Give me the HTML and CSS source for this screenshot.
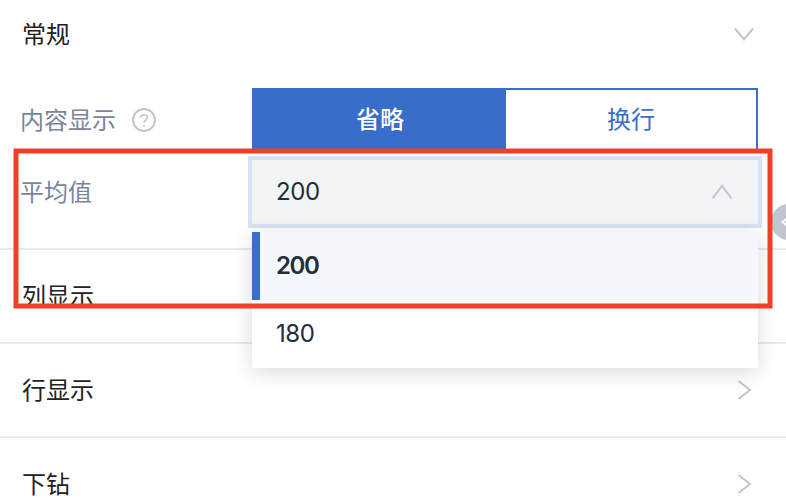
FILE: index.html
```
<!DOCTYPE html>
<html lang="zh-CN">
<head>
    <meta charset="UTF-8">
    <meta name="viewport" content="width=device-width, initial-scale=1.0">
    <title>常规</title>
    <link rel="stylesheet" href="styles.css">
</head>
<body>
    <div class="panel">

        <!-- Expanded section -->
        <div class="section section-open">
            <div class="section-head">
                <span class="section-title">常规</span>
                <svg class="arrow" width="20" height="20" viewBox="0 0 20 20"><path d="M1 4.5L10 15.5L19 4.5"/></svg>
            </div>
            <div class="form">
                <div class="form-row">
                    <div class="label">
                        <span class="label-text">内容显示</span>
                        <svg class="help" width="24" height="24" viewBox="0 0 24 24">
                            <circle cx="12" cy="12" r="11"/>
                            <path class="mark" d="M8.5 9.8C8.5 7.9 9.9 6.8 12 6.8S15.5 7.9 15.5 9.6C15.5 11.7 12 11.9 12 14.6"/>
                            <path class="mark" d="M12 17V18.8"/>
                        </svg>
                    </div>
                    <div class="segment">
                        <div class="segment-item active">省略</div>
                        <div class="segment-item">换行</div>
                    </div>
                </div>
                <div class="form-row">
                    <div class="label"><span class="label-text">平均值</span></div>
                    <div class="select">
                        <span>200</span>
                        <svg class="arrow" width="22" height="20" viewBox="0 0 22 20"><path d="M1.5 16.3L11 4L20.5 16.3"/></svg>
                        <div class="dropdown">
                            <div class="option selected">200</div>
                            <div class="option">180</div>
                        </div>
                    </div>
                </div>
            </div>
        </div>

        <!-- Collapsed sections -->
        <div class="section">
            <div class="section-head"><span class="section-title">列显示</span></div>
        </div>
        <div class="section">
            <div class="section-head">
                <span class="section-title">行显示</span>
                <svg class="arrow" width="20" height="20" viewBox="0 0 20 20"><path d="M4.5 1L16 10L4.5 19"/></svg>
            </div>
        </div>
        <div class="section">
            <div class="section-head">
                <span class="section-title">下钻</span>
                <svg class="arrow" width="20" height="20" viewBox="0 0 20 20"><path d="M4.5 1L16 10L4.5 19"/></svg>
            </div>
        </div>

        <!-- Collapse handle -->
        <div class="handle">
            <svg width="12" height="12" viewBox="0 0 12 12"><path d="M9.5 2L4.5 6L9.5 10"/></svg>
        </div>

        <!-- Highlight frame -->
        <svg class="highlight" width="760" height="161" viewBox="0 0 760 161">
            <rect x="3" y="3" width="754" height="155"/>
        </svg>
    </div>
</body>
</html>
```

FILE: styles.css
```
* {
    box-sizing: border-box;
}

body {
    margin: 0;
    background: #fff;
    color: #222;
    font-family: Inter, "Noto Sans CJK SC", sans-serif;
    font-size: 24px;
    line-height: 36px;
}

svg {
    display: block;
    fill: none;
}

.panel {
    position: relative;
    height: 502px;
    overflow: hidden;
}

/* Sections */
.section {
    height: 94px;
    border-bottom: 2px solid #e9eaf0;
}
.section-open {
    height: 250px;
}
.section-head {
    display: flex;
    align-items: center;
    justify-content: space-between;
    height: 92px;
    padding: 0 32px 0 22px;
}
.section-open .section-head {
    height: 68px;
}
.section-title,
.label-text {
    padding-top: 1px;
}
.arrow {
    stroke: #c1c5cf;
    stroke-width: 2;
}

/* Form */
.form {
    display: flex;
    flex-direction: column;
    gap: 8px;
    padding: 20px 28px 0 20px;
}
.form-row {
    display: flex;
    height: 64px;
}
.label {
    display: flex;
    align-items: center;
    gap: 16px;
    width: 232px;
    color: #79859b;
}
.help {
    stroke: #c1c5cf;
    stroke-width: 2;
}
.help .mark {
    stroke-width: 1.6;
}

.segment {
    display: flex;
    flex: 1;
    border: 2px solid #386dca;
}
.segment-item {
    display: flex;
    align-items: center;
    justify-content: center;
    flex: 1;
    color: #386dca;
}
.segment-item.active {
    flex: 0 0 252px;
    background: #386dca;
    color: #fff;
    font-weight: 500;
}

/* Select */
.select {
    position: relative;
    display: flex;
    flex: 1;
    align-items: center;
    justify-content: space-between;
    padding: 0 25px 0 24px;
    background: #f3f4f6;
    box-shadow: 0 0 0 4px #d7e2f4;
    color: #242c3a;
    letter-spacing: -0.4px;
}
.dropdown {
    position: absolute;
    z-index: 1;
    top: 72px;
    left: 0;
    width: 100%;
    background: #fff;
    box-shadow: 0 4px 20px rgba(0, 0, 0, 0.15);
}
.option {
    display: flex;
    align-items: center;
    height: 68px;
    padding-left: 24px;
}
.option.selected {
    padding-left: 16px;
    border-left: 8px solid #386dca;
    background: #f4f8fd;
    font-weight: 600;
    letter-spacing: -1.4px;
}

.handle {
    position: absolute;
    top: 204px;
    left: 771px;
    width: 36px;
    height: 36px;
    padding: 12px 7px;
    border-radius: 50%;
    background: #c1c5cf;
}
.handle path {
    stroke: #fff;
    stroke-width: 2;
}

.highlight {
    position: absolute;
    z-index: 2;
    top: 148px;
    left: 13px;
    pointer-events: none;
}
.highlight rect {
    stroke: #ee4026;
    stroke-width: 5;
}
```
